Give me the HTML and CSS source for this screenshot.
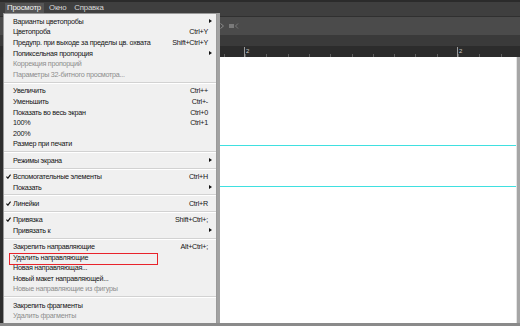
FILE: index.html
```html
<!DOCTYPE html>
<html lang="ru">
<head>
<meta charset="utf-8">
<title>Просмотр</title>
<link rel="stylesheet" href="styles.css">
</head>
<body>
<div class="app">
  <div class="menubar">
    <span class="mb-item active">Просмотр</span>
    <span class="mb-item">Окно</span>
    <span class="mb-item">Справка</span>
  </div>
  <div class="optbar">
    <svg class="opt-icons" width="24" height="8" viewBox="0 0 24 8">
      <path d="M0.5 1.5 L3.5 4 L0.5 6.5" fill="none" stroke="#8a8a8a" stroke-width="1"/>
      <rect x="9" y="2" width="5" height="4" fill="#7a7a7a"/>
      <path d="M18 1.5 L15.5 4 L18 6.5" fill="none" stroke="#7a7a7a" stroke-width="1"/>
    </svg>
  </div>
  <div class="tabbar"></div>
  <div class="ruler">
    <span class="rmark m1">2</span>
    <span class="rmark m2">2</span>
  </div>
  <div class="workspace">
    <div class="canvas">
      <div class="guide g1"></div>
      <div class="guide g2"></div>
    </div>
    <div class="vstrip"></div>
  </div>
  <div class="bottom"></div>

  <div class="menu">
    <div class="row"><span class="lbl">Варианты цветопробы</span><span class="arrow"></span></div>
    <div class="row"><span class="lbl">Цветопроба</span><span class="key">Ctrl+Y</span></div>
    <div class="row"><span class="lbl">Предупр. при выходе за пределы цв. охвата</span><span class="key">Shift+Ctrl+Y</span></div>
    <div class="row"><span class="lbl">Попиксельная пропорция</span><span class="arrow"></span></div>
    <div class="row off"><span class="lbl">Коррекция пропорций</span></div>
    <div class="row off"><span class="lbl">Параметры 32-битного просмотра...</span></div>
    <div class="sep"></div>
    <div class="row"><span class="lbl">Увеличить</span><span class="key">Ctrl++</span></div>
    <div class="row"><span class="lbl">Уменьшить</span><span class="key">Ctrl+-</span></div>
    <div class="row"><span class="lbl">Показать во весь экран</span><span class="key">Ctrl+0</span></div>
    <div class="row"><span class="lbl">100%</span><span class="key">Ctrl+1</span></div>
    <div class="row"><span class="lbl">200%</span></div>
    <div class="row"><span class="lbl">Размер при печати</span></div>
    <div class="sep"></div>
    <div class="row"><span class="lbl">Режимы экрана</span><span class="arrow"></span></div>
    <div class="sep"></div>
    <div class="row"><svg class="check" width="5" height="5" viewBox="0 0 5 5"><path d="M0.4 2.6 L1.9 4.2 L4.6 0.6" fill="none" stroke="#111" stroke-width="1.2"/></svg><span class="lbl">Вспомогательные элементы</span><span class="key">Ctrl+H</span></div>
    <div class="row"><span class="lbl">Показать</span><span class="arrow"></span></div>
    <div class="sep"></div>
    <div class="row"><svg class="check" width="5" height="5" viewBox="0 0 5 5"><path d="M0.4 2.6 L1.9 4.2 L4.6 0.6" fill="none" stroke="#111" stroke-width="1.2"/></svg><span class="lbl">Линейки</span><span class="key">Ctrl+R</span></div>
    <div class="sep"></div>
    <div class="row"><svg class="check" width="5" height="5" viewBox="0 0 5 5"><path d="M0.4 2.6 L1.9 4.2 L4.6 0.6" fill="none" stroke="#111" stroke-width="1.2"/></svg><span class="lbl">Привязка</span><span class="key">Shift+Ctrl+;</span></div>
    <div class="row"><span class="lbl">Привязать к</span><span class="arrow"></span></div>
    <div class="sep"></div>
    <div class="row"><span class="lbl">Закрепить направляющие</span><span class="key">Alt+Ctrl+;</span></div>
    <div class="row marked"><span class="lbl">Удалить направляющие</span></div>
    <div class="row"><span class="lbl">Новая направляющая...</span></div>
    <div class="row"><span class="lbl">Новый макет направляющей...</span></div>
    <div class="row off"><span class="lbl">Новые направляющие из фигуры</span></div>
    <div class="sep"></div>
    <div class="row"><span class="lbl">Закрепить фрагменты</span></div>
    <div class="row off"><span class="lbl">Удалить фрагменты</span></div>
  </div>
</div>
</body>
</html>
```

FILE: styles.css
```css
* { box-sizing: border-box; }
html, body { margin: 0; padding: 0; }
body { background: #2e2e2e; }

.app {
  position: relative;
  width: 520px;
  height: 326px;
  display: flex;
  flex-direction: column;
  overflow: hidden;
  font-family: "Liberation Sans", Arial, sans-serif;
  font-size: 7.2px;
  letter-spacing: -0.25px;
  background: #333333;
}

.menubar {
  height: 16px;
  flex: none;
  display: flex;
  align-items: flex-start;
  padding: 1px 0 0 5px;
  background: #3f3f3f;
  border-top: 2px solid #2b2b2b;
  font-size: 7.8px;
  letter-spacing: -0.2px;
}
.mb-item {
  height: 10px;
  line-height: 10px;
  padding: 0 2px;
  color: #d8d8d8;
  margin-right: 4px;
}
.mb-item.active {
  background: #555555;
  color: #f2f2f2;
  padding: 0 3px 0 2px;
  margin-right: 3px;
}

.optbar {
  height: 19px;
  flex: none;
  background: #4b4b4b;
  border-top: 1px solid #303030;
  display: flex;
  align-items: center;
  padding-left: 220px;
}
.opt-icons { display: block; }

.tabbar {
  height: 11px;
  flex: none;
  background: #3a3a3a;
}

.ruler {
  position: relative;
  height: 11px;
  flex: none;
  background-color: #2c2c2c;
  background-image: repeating-linear-gradient(to right, transparent 0 20.3px, #5e5e5e 20.3px 21.3px);
  background-size: 100% 3px;
  background-repeat: no-repeat;
  background-position: -9.6px 100%;
}
.rmark {
  position: absolute;
  top: 1px;
  height: 10px;
  border-left: 1px solid #9a9a9a;
  padding-left: 1px;
  font-size: 6px;
  line-height: 8px;
  color: #c8c8c8;
}
.rmark.m1 { left: 244px; }
.rmark.m2 { left: 457px; }

.workspace {
  flex: 1;
  display: flex;
  padding-left: 3px;
  background: #2e2e2e;
}
.canvas {
  position: relative;
  flex: 1;
  background: #ffffff;
  border-right: 1px solid #e4e4e4;
}
.guide {
  position: absolute;
  left: 0;
  right: 0;
  height: 1px;
  background: #3fe0e0;
}
.g1 { top: 88px; }
.g2 { top: 129px; }
.vstrip {
  width: 3px;
  background: #a6a6a6;
}
.bottom {
  height: 3px;
  flex: none;
  background: #8a8a8a;
}

.menu {
  position: absolute;
  left: 3px;
  top: 13px;
  width: 214px;
  height: 310px;
  padding-top: 2px;
  background: #f0f0f0;
  border: 1px solid #9a9a9a;
  border-bottom: none;
  box-shadow: 3px 0 0 #a2a2a2;
}
.row {
  position: relative;
  display: flex;
  align-items: center;
  height: 10.65px;
  padding: 0 8px 0 9px;
  color: #141414;
  white-space: nowrap;
}
.row.off { color: #8d8d8d; }
.key { margin-left: auto; }
.arrow {
  position: absolute;
  right: 4px;
  top: 3px;
  width: 0;
  height: 0;
  border-left: 3px solid #111;
  border-top: 2.5px solid transparent;
  border-bottom: 2.5px solid transparent;
}
.check {
  position: absolute;
  left: 2px;
  top: 3px;
}
.row.marked::after {
  content: "";
  position: absolute;
  left: 5px;
  top: 1px;
  width: 147px;
  height: 10px;
  border: 1.5px solid #e8232b;
}
.sep {
  height: 2px;
  margin: 2px 0 1.6px;
  border-top: 1px solid #d2d2d2;
  border-bottom: 1px solid #ffffff;
}
```
